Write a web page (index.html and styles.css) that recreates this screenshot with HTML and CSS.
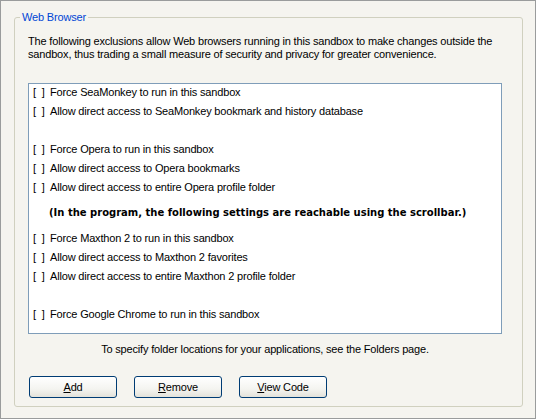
FILE: index.html
```html
<!DOCTYPE html>
<html>
<head>
<meta charset="utf-8">
<link rel="stylesheet" href="styles.css">
</head>
<body>
<div class="window">
  <fieldset class="group">
    <legend class="group-title">Web Browser</legend>
    <p class="desc">The following exclusions allow Web browsers running in this sandbox to make changes outside the<br>sandbox, thus trading a small measure of security and privacy for greater convenience.</p>
    <div class="list">
      <div class="item"><span class="box">[&nbsp;&nbsp;]</span>Force SeaMonkey to run in this sandbox</div>
      <div class="item"><span class="box">[&nbsp;&nbsp;]</span>Allow direct access to SeaMonkey bookmark and history database</div>
      <div class="item"></div>
      <div class="item"><span class="box">[&nbsp;&nbsp;]</span>Force Opera to run in this sandbox</div>
      <div class="item"><span class="box">[&nbsp;&nbsp;]</span>Allow direct access to Opera bookmarks</div>
      <div class="item"><span class="box">[&nbsp;&nbsp;]</span>Allow direct access to entire Opera profile folder</div>
      <div class="note">(In the program, the following settings are reachable using the scrollbar.)</div>
      <div class="item"><span class="box">[&nbsp;&nbsp;]</span>Force Maxthon 2 to run in this sandbox</div>
      <div class="item"><span class="box">[&nbsp;&nbsp;]</span>Allow direct access to Maxthon 2 favorites</div>
      <div class="item"><span class="box">[&nbsp;&nbsp;]</span>Allow direct access to entire Maxthon 2 profile folder</div>
      <div class="item"></div>
      <div class="item"><span class="box">[&nbsp;&nbsp;]</span>Force Google Chrome to run in this sandbox</div>
    </div>
    <p class="hint">To specify folder locations for your applications, see the Folders page.</p>
    <div class="buttons">
      <button class="btn"><u>A</u>dd</button>
      <button class="btn"><u>R</u>emove</button>
      <button class="btn"><u>V</u>iew Code</button>
    </div>
  </fieldset>
</div>
</body>
</html>
```
FILE: styles.css
```css
html, body {
  margin: 0;
  padding: 0;
  background: #f5f4ef;
}
body {
  font-family: "Liberation Sans", Arial, sans-serif;
  font-size: 11px;
  letter-spacing: -0.17px;
  color: #000;
}
.window {
  box-sizing: border-box;
  width: 536px;
  height: 419px;
  border: 1px solid #9a9c9c;
  background: #f5f4ef;
  padding: 9px 12px 0 13px;
}
.group {
  margin: 0;
  border: 1px solid #d0d0bf;
  border-radius: 3px;
  padding: 0 20px 8px 13px;
  min-width: 0;
}
.group-title {
  color: #0046d5;
  line-height: 14px;
  padding: 0 2px;
  margin-left: -8px;
}
.desc {
  margin: 11px 0 0 0;
  line-height: 13px;
  white-space: nowrap;
}
.list {
  box-sizing: border-box;
  margin-top: 22px;
  height: 251px;
  border: 1px solid #7f9db9;
  background: #fff;
  padding: 0 0 0 4px;
}
.item {
  height: 19px;
  line-height: 17px;
  white-space: nowrap;
}
.box {
  display: inline-block;
  width: 17px;
}
.note {
  height: 32px;
  line-height: 30px;
  font-family: "DejaVu Sans", Verdana, sans-serif;
  font-size: 10px;
  letter-spacing: 0;
  font-weight: bold;
  padding-left: 16px;
  white-space: nowrap;
}
.hint {
  margin: 9px 0 0 0;
  line-height: 13px;
  text-align: center;
  white-space: nowrap;
}
.buttons {
  display: flex;
  gap: 17px;
  margin-top: 20px;
  padding-left: 1px;
}
.btn {
  box-sizing: border-box;
  width: 88px;
  height: 22px;
  border: 1px solid #003c74;
  border-radius: 3px;
  background: linear-gradient(#ffffff, #f4f4f0 60%, #e3e2da);
  font-family: "Liberation Sans", Arial, sans-serif;
  font-size: 11px;
  letter-spacing: -0.17px;
  color: #000;
  padding: 0;
}
```
